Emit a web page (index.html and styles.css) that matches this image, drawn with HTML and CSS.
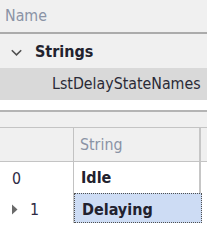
FILE: index.html
```html
<!DOCTYPE html>
<html>
<head>
<meta charset="utf-8">
<link rel="stylesheet" href="styles.css">
</head>
<body>
<div class="tree">
  <div class="tree-head">Name</div>
  <div class="group">
    <svg class="chev" width="12" height="8" viewBox="0 0 12 8"><path d="M0.8 1.2 L5.5 5.9 L10.2 1.2" fill="none" stroke="#505050" stroke-width="1.6"/></svg>
    <span class="group-label">Strings</span>
  </div>
  <div class="item">LstDelayStateNames</div>
  <div class="tree-end"></div>
</div>
<div class="gap"></div>
<div class="grid">
  <div class="grid-row grid-head">
    <div class="c-ind"></div>
    <div class="c-str head-text">String</div>
    <div class="c-rest"></div>
  </div>
  <div class="grid-row r0">
    <div class="c-ind"><span class="num">0</span></div>
    <div class="c-str val">Idle</div>
    <div class="c-rest"></div>
  </div>
  <div class="grid-row r1">
    <div class="c-ind cur"><svg class="tri" width="6" height="11" viewBox="0 0 6 11"><path d="M0 0.5 L5.5 5.5 L0 10.5 Z" fill="#6a6a6a"/></svg><span class="num">1</span></div>
    <div class="c-str val sel">Delaying</div>
    <div class="c-rest"></div>
  </div>
</div>
</body>
</html>
```
FILE: styles.css
```css
html, body {
  margin: 0;
  padding: 0;
  width: 207px;
  height: 228px;
  overflow: hidden;
  background: #ffffff;
  font-family: "DejaVu Sans Condensed", "DejaVu Sans", sans-serif;
  font-stretch: condensed;
  font-size: 15.8px;
  color: #22222e;
}
.tree {
  background: #f0f0f0;
}
.tree-head {
  height: 32px;
  line-height: 32px;
  padding-left: 5px;
  color: #8a93a5;
  border-bottom: 2px solid #ababab;
}
.group {
  height: 34px;
  display: flex;
  align-items: center;
  box-sizing: border-box;
  padding-top: 2px;
}
.chev {
  margin-left: 11px;
  margin-right: 12px;
  margin-top: 1px;
}
.group-label {
  font-weight: bold;
  font-size: 16px;
  line-height: 20px;
}
.item {
  height: 32px;
  line-height: 32px;
  background: #d9d9d9;
  padding-left: 52px;
  color: #2a2a36;
}
.tree-end {
  height: 10px;
  background: #ffffff;
  border-bottom: 2px solid #b4b4b4;
}
.gap {
  height: 15px;
  background: #f0f0f0;
  border-bottom: 1px solid #c4c4c4;
}
.grid-row {
  display: flex;
}
.c-ind {
  width: 73px;
  border-right: 1px solid #c2c2c2;
  display: flex;
  align-items: center;
  flex: none;
}
.c-str {
  width: 127px;
  border-right: 2px solid #c6c6c6;
  box-sizing: border-box;
  display: flex;
  align-items: center;
  padding-left: 6px;
  flex: none;
}
.c-rest {
  flex: 1;
}
.grid-head {
  height: 33px;
  background: #f0f0f0;
  border-bottom: 1px solid #c4c4c4;
}
.head-text {
  color: #8a93a5;
}
.r0 {
  height: 31px;
}
.r1 {
  height: 30px;
}
.num {
  margin-left: 12px;
  color: #2e2a44;
  padding-top: 2px;
}
.cur .tri {
  margin-left: 12px;
  margin-top: 2px;
}
.cur .num {
  margin-left: 12px;
}
.val {
  font-weight: bold;
  font-size: 16px;
  padding-left: 7px;
}
.sel {
  width: 128px;
  background: #cddcf4;
  border: 1px dotted #505050;
  padding-top: 2px;
}
```
